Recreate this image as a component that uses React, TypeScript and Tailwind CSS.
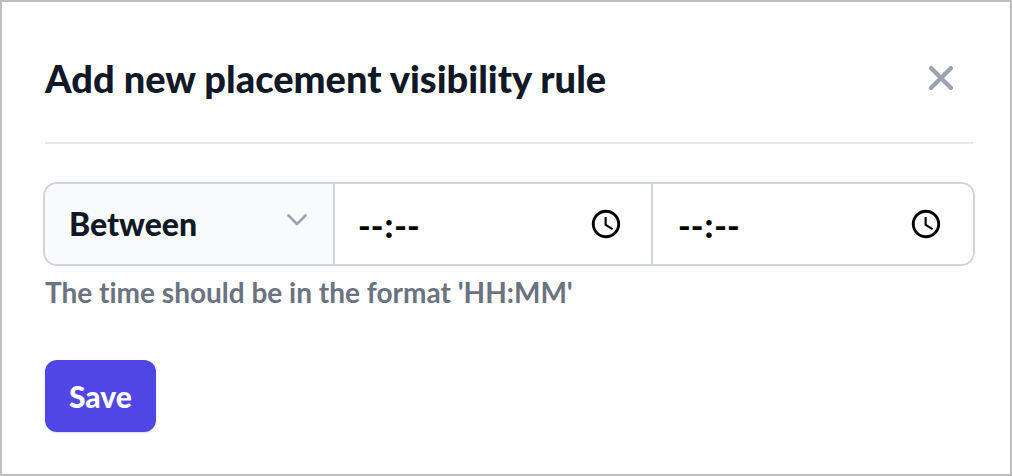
import { useState } from "react";

function CloseIcon() {
  return (
    <svg viewBox="0 0 24 24" className="size-6" fill="none" stroke="currentColor" strokeWidth="4.4" strokeLinecap="round" aria-hidden="true">
      <path d="M2.2 2.2l19.6 19.6M21.8 2.2L2.2 21.8" />
    </svg>
  );
}

function ChevronDown() {
  return (
    <svg
      viewBox="0 0 20 12"
      className="pointer-events-none col-start-1 row-start-1 mr-[26px] mb-2 h-3 w-5 self-center justify-self-end text-[#9ca3af]"
      fill="none"
      stroke="currentColor"
      strokeWidth="2.6"
      strokeLinecap="round"
      strokeLinejoin="round"
      aria-hidden="true"
    >
      <path d="M1.5 1.5L10 10l8.5-8.5" />
    </svg>
  );
}

type TimeFieldProps = {
  label: string;
  value: string;
  onChange: (value: string) => void;
  className: string;
};

function TimeField({ label, value, onChange, className }: TimeFieldProps) {
  return (
    <input
      type="time"
      aria-label={label}
      aria-describedby="time-hint"
      value={value}
      onChange={(event) => onChange(event.target.value)}
      className={`min-w-0 flex-1 border-l-2 border-[#d1d5db] bg-white text-[34px] font-black text-black outline-none focus:bg-indigo-50 [&::-webkit-calendar-picker-indicator]:size-[34px] [&::-webkit-calendar-picker-indicator]:p-0 [&::-webkit-datetime-edit-ampm-field]:hidden ${className}`}
    />
  );
}

export default function App() {
  const [condition, setCondition] = useState("between");
  const [from, setFrom] = useState("");
  const [to, setTo] = useState("");

  return (
    <main
      role="dialog"
      aria-labelledby="rule-title"
      className="min-h-screen border-2 border-[#bebebe] bg-white pt-10 pr-[35px] pb-10 pl-[41px] font-['Lato',sans-serif] font-bold [font-variant-ligatures:none]"
    >
      <header className="mx-0.5 flex items-start justify-between border-b-2 border-[#e5e7eb] pb-7">
        <h1 id="rule-title" className="text-[38px] leading-[72px] font-black text-[#111827]">
          Add new placement visibility rule
        </h1>
        <button type="button" aria-label="Close" className="mt-3 mr-3 p-2 pt-3 text-[#9ca3af]">
          <CloseIcon />
        </button>
      </header>
      <form onSubmit={(event) => event.preventDefault()}>
        <div className="mt-[38px] flex h-[84px] overflow-hidden rounded-[14px] border-2 border-[#d1d5db]">
          <div className="grid w-72 shrink-0 bg-[#f9fafb]">
            <select
              aria-label="Condition"
              value={condition}
              onChange={(event) => setCondition(event.target.value)}
              className="col-start-1 row-start-1 w-full appearance-none bg-transparent pr-14 pl-6 text-[32px] font-black text-[#111827] outline-none"
            >
              <option value="between">Between</option>
            </select>
            <ChevronDown />
          </div>
          <TimeField label="Start time" value={from} onChange={setFrom} className="pr-7 pl-[22px]" />
          <TimeField label="End time" value={to} onChange={setTo} className="pr-[30px] pl-6" />
        </div>
        <p id="time-hint" className="mx-0.5 mt-1.5 text-[28px] leading-10 text-[#6b7280]">
          The time should be in the format 'HH:MM'
        </p>
        <button type="submit" className="mx-0.5 mt-12 h-[72px] rounded-xl bg-[#4f46e5] px-6 text-[30px] font-black text-white shadow-sm">
          Save
        </button>
      </form>
    </main>
  );
}
